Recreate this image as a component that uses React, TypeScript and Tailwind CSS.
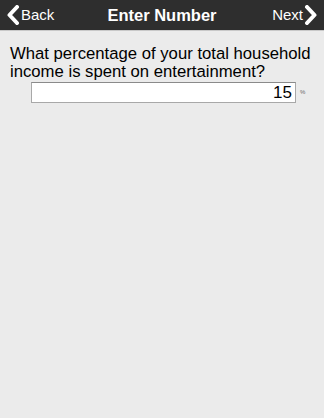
export default function App() {
  return (
    <div className="w-[324px] h-[418px] bg-[#ebebeb] flex flex-col" style={{ fontFamily: '"Liberation Sans", Arial, sans-serif' }}>
      <div className="h-[31px] bg-[#2e2e2e] border-b border-[#c8c8c8] flex items-center justify-between relative">
        <div className="flex items-center pl-[6px] text-white text-[15px]">
          <svg width="14" height="20" viewBox="0 0 14 20" className="mr-[1px]">
            <path d="M11 2 L3.5 10 L11 18" fill="none" stroke="white" strokeWidth="4" strokeLinecap="round" strokeLinejoin="round" />
          </svg>
          <span>Back</span>
        </div>
        <div className="absolute left-0 right-0 text-center text-white text-[16.5px] font-bold pointer-events-none">Enter Number</div>
        <div className="flex items-center pr-[6px] text-white text-[15px]">
          <span>Next</span>
          <svg width="14" height="20" viewBox="0 0 14 20" className="ml-[1px]">
            <path d="M3 2 L10.5 10 L3 18" fill="none" stroke="white" strokeWidth="4" strokeLinecap="round" strokeLinejoin="round" />
          </svg>
        </div>
      </div>
      <div className="px-[10px] pt-[14px] text-[16.7px] leading-[18px] text-black whitespace-nowrap">
        What percentage of your total household
        <br />
        income is spent on entertainment?
      </div>
      <div className="flex items-center mt-[1px] pl-[31px]">
        <div className="w-[265px] h-[21px] bg-white border border-[#a8a8a8] border-t-[#8a8a8a] flex items-center justify-end pr-[3px] text-[17px] text-black">15</div>
        <span className="ml-[4px] text-[6px] text-[#666]">%</span>
      </div>
    </div>
  );
}
